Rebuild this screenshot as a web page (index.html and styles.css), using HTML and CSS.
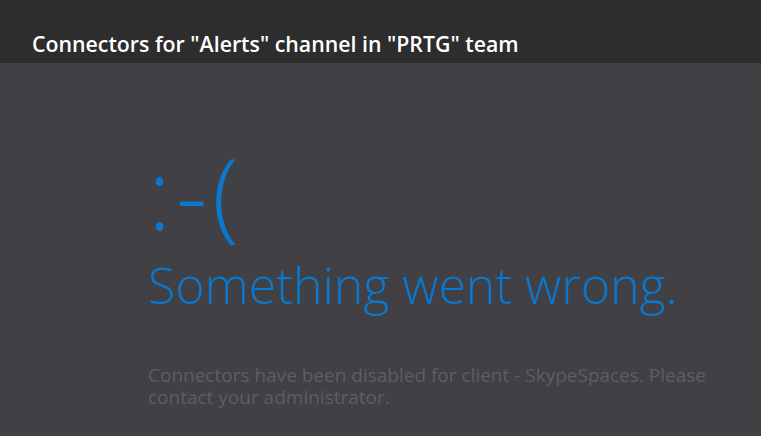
FILE: index.html
```html
<!DOCTYPE html>
<html>
<head>
<meta charset="utf-8">
<link rel="stylesheet" href="styles.css">
</head>
<body>
<header class="header">
  <h1 class="title">Connectors for "Alerts" channel in "PRTG" team</h1>
</header>
<main class="content">
  <div class="face">:-(</div>
  <div class="headline">Something went wrong.</div>
  <p class="message">Connectors have been disabled for client - SkypeSpaces. Please contact your administrator.</p>
</main>
</body>
</html>
```
FILE: styles.css
```css
html, body {
  margin: 0;
  padding: 0;
  height: 100%;
  background: #414045;
  overflow: hidden;
}
body {
  font-family: "Open Sans", "Noto Sans", sans-serif;
}
.header {
  background: #2d2d2d;
  height: 63px;
  padding: 0 32px;
  box-sizing: border-box;
  display: flex;
  align-items: flex-end;
}
.title {
  margin: 0 0 6px 0;
  color: #ffffff;
  font-size: 21.3px;
  font-weight: 600;
  line-height: 26px;
}
.content {
  padding: 89px 40px 0 148px;
}
.face {
  color: #0a78d0;
  font-size: 97px;
  font-weight: 300;
  line-height: 80px;
  letter-spacing: 5px;
}
.headline {
  color: #0a78d0;
  font-size: 50px;
  font-weight: 300;
  line-height: 60px;
  margin-top: 23px;
}
.message {
  color: #5e5d63;
  font-size: 19px;
  line-height: 22px;
  margin: 49px 0 0 0;
}
```
